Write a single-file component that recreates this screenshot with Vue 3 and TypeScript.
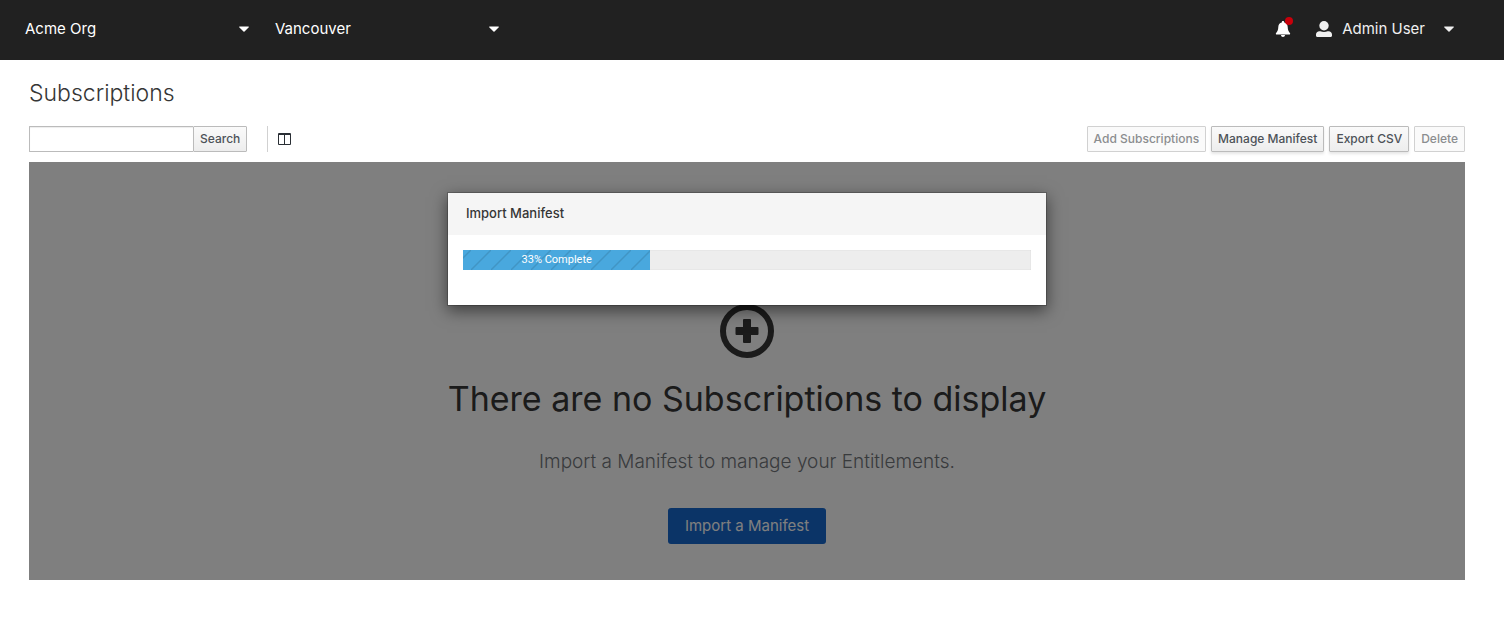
<script setup lang="ts">
import { ref } from 'vue'

interface Action {
  label: string
  disabled: boolean
}

const contexts = ['Acme Org', 'Vancouver']
const query = ref('')
const progress = ref(33)
const actions: Action[] = [
  { label: 'Add Subscriptions', disabled: true },
  { label: 'Manage Manifest', disabled: false },
  { label: 'Export CSV', disabled: false },
  { label: 'Delete', disabled: true },
]
</script>

<template>
  <header class="masthead">
    <nav class="contexts" aria-label="Context">
      <button v-for="name in contexts" :key="name" type="button" class="context">
        <span>{{ name }}</span>
        <svg class="caret" viewBox="0 0 10 6" aria-hidden="true"><path d="M.6.5h8.8c.5 0 .7.5.4.8L5.5 5.5c-.3.3-.7.3-1 0L.2 1.3C-.1 1 .1.5.6.5z" /></svg>
      </button>
    </nav>
    <div class="tools">
      <button type="button" class="bell" aria-label="Notifications">
        <svg viewBox="0 0 16 16" aria-hidden="true">
          <path d="M8 0c.7 0 1.200.5 1.200 1.200v.3c2.200.5 3.500 2.300 3.500 4.600 0 3.200 1.200 4.800 2.200 5.900.6.700.2 1.600-.7 1.600H1.800c-.9 0-1.300-.9-.7-1.600 1-1.100 2.200-2.700 2.200-5.900 0-2.300 1.300-4.100 3.500-4.600v-.3C6.800.5 7.300 0 8 0zM6 14h4c0 1.100-.9 2-2 2s-2-.9-2-2z" />
        </svg>
        <span class="dot"></span>
      </button>
      <button type="button" class="user">
        <svg class="avatar" viewBox="0 0 16 16" aria-hidden="true">
          <circle cx="8" cy="4.700" r="4.700" />
          <path d="M3.400 10.200h1c2.200 1 5 1 7.200 0h1c1.900 0 3.400 1.400 3.400 3.300v1.300c0 .7-.5 1.200-1.200 1.200H1.200C.5 16 0 15.500 0 14.800v-1.300c0-1.900 1.500-3.300 3.400-3.300z" />
        </svg>
        <span>Admin User</span>
        <svg class="caret" viewBox="0 0 10 6" aria-hidden="true"><path d="M.6.5h8.8c.5 0 .7.5.4.8L5.5 5.5c-.3.3-.7.3-1 0L.2 1.3C-.1 1 .1.5.6.5z" /></svg>
      </button>
    </div>
  </header>

  <main class="page">
    <h1>Subscriptions</h1>
    <div class="toolbar">
      <form class="search" @submit.prevent>
        <input v-model="query" type="text" aria-label="Search subscriptions" />
        <button type="submit" class="btn">Search</button>
      </form>
      <div class="columns">
        <button type="button" aria-label="Choose columns">
          <svg viewBox="0 0 13 12" aria-hidden="true"><path fill-rule="evenodd" d="M1 0h11a1 1 0 0 1 1 1v10a1 1 0 0 1-1 1H1a1 1 0 0 1-1-1V1a1 1 0 0 1 1-1zM1 2v9h5V2zM7 2v9h5V2z" /></svg>
        </button>
      </div>
      <div class="actions">
        <button v-for="a in actions" :key="a.label" type="button" class="btn" :disabled="a.disabled">{{ a.label }}</button>
      </div>
    </div>

    <section class="stage">
      <div class="empty">
        <svg class="plus" viewBox="0 0 54 54" aria-hidden="true">
          <circle cx="27" cy="27" r="24" fill="none" stroke="currentColor" stroke-width="6" />
          <path d="M24 15h6a1 1 0 0 1 1 1v7h6.500a1 1 0 0 1 1 1v6a1 1 0 0 1-1 1H31v7a1 1 0 0 1-1 1h-6a1 1 0 0 1-1-1v-7h-6.500a1 1 0 0 1-1-1v-6a1 1 0 0 1 1-1H23v-7a1 1 0 0 1 1-1z" fill="currentColor" />
        </svg>
        <h2>There are no Subscriptions to display</h2>
        <p>Import a Manifest to manage your Entitlements.</p>
        <button type="button" class="primary">Import a Manifest</button>
      </div>
      <div class="backdrop">
        <div class="dialog" role="dialog" aria-modal="true" aria-labelledby="dialog-title">
          <div class="dialog-head"><h3 id="dialog-title">Import Manifest</h3></div>
          <div class="dialog-body">
            <div class="progress" role="progressbar" aria-label="Import progress" :aria-valuenow="progress" aria-valuemin="0" aria-valuemax="100">
              <div class="bar" :style="{ width: progress + '%' }">{{ progress }}% Complete</div>
            </div>
          </div>
        </div>
      </div>
    </section>
  </main>
</template>

<style>
body {
  background: #fff;
  color: #363636;
  font-family: Inter, "Noto Sans", sans-serif;
}
</style>

<style scoped>
* {
  box-sizing: border-box;
}
button,
input {
  font-family: inherit;
}
button {
  cursor: pointer;
}
button:disabled {
  cursor: default;
}
h1,
h2,
h3,
p {
  margin: 0;
}
.masthead {
  display: flex;
  justify-content: space-between;
  height: 60px;
  padding: 0 49px 3px 25px;
  background: #212121;
}
.contexts,
.tools {
  display: flex;
}
.masthead button {
  display: flex;
  align-items: center;
  border: 0;
  padding: 0;
  background: none;
  color: #fff;
  font-size: 15px;
}
.masthead svg {
  fill: currentColor;
}
.masthead .context {
  justify-content: space-between;
  width: 250px;
  padding-right: 26px;
}
.caret {
  width: 10px;
  height: 6px;
}
.masthead .bell {
  position: relative;
  margin-right: 25px;
}
.bell svg {
  width: 16px;
  height: 16px;
}
.dot {
  position: absolute;
  top: 17px;
  right: -2px;
  width: 8px;
  height: 8px;
  border-radius: 50%;
  background: #c9000b;
}
.masthead .user {
  color: #f0f0f0;
}
.avatar {
  width: 16px;
  height: 16px;
  margin-right: 10px;
}
.user .caret {
  margin: 0 1px 0 19px;
}
.page {
  padding: 18px 39px 0 29px;
}
h1 {
  font-size: 23px;
  font-weight: 300;
  line-height: 30px;
}
.toolbar {
  display: flex;
  align-items: stretch;
  height: 26px;
  margin: 18px 0 10px;
}
.search {
  display: flex;
}
.search input {
  width: 164px;
  padding: 2px 6px;
  border: 1px solid #bbb;
  border-right: 0;
  border-radius: 1px 0 0 1px;
  box-shadow: inset 0 1px 1px rgba(3, 3, 3, 0.075);
  font-size: 12px;
}
.btn {
  padding: 0 6px 1px;
  border: 1px solid #bbb;
  border-radius: 1px;
  background: linear-gradient(#fafafa, #ededed);
  box-shadow: 0 2px 3px rgba(3, 3, 3, 0.1);
  color: #4d5258;
  font-size: 12px;
  font-weight: 500;
  white-space: nowrap;
}
.search .btn {
  box-shadow: none;
}
.btn:disabled {
  border-color: #d1d1d1;
  background: #fafafa;
  box-shadow: none;
  color: #8b8d8f;
}
.columns {
  display: flex;
  margin-left: 20px;
  padding-left: 10px;
  border-left: 1px solid #d1d1d1;
}
.columns button {
  display: flex;
  align-items: center;
  border: 0;
  padding: 0;
  background: none;
}
.columns svg {
  width: 13px;
  height: 12px;
  fill: #292e34;
}
.actions {
  display: flex;
  gap: 5px;
  margin-left: auto;
}
.stage {
  position: relative;
}
.empty {
  display: flex;
  flex-direction: column;
  align-items: center;
  padding: 142px 24px 36px;
}
.plus {
  width: 54px;
  height: 54px;
}
h2 {
  margin-top: 17px;
  font-size: 34px;
  font-weight: 400;
  line-height: 48px;
  text-align: center;
}
.empty p {
  margin: 24px 0 31px;
  color: #72767b;
  font-size: 19px;
  font-weight: 300;
  line-height: 30px;
  text-align: center;
}
.primary {
  height: 36px;
  padding: 0 17px 2px;
  border: 0;
  border-radius: 3px;
  background: #1668ce;
  color: #fff;
  font-size: 15px;
}
.backdrop {
  position: absolute;
  inset: 0;
  padding-top: 30px;
  background: rgba(0, 0, 0, 0.5);
}
.dialog {
  width: 600px;
  max-width: 100%;
  margin: 0 auto;
  border: 1px solid rgba(0, 0, 0, 0.2);
  background: #fff;
  background-clip: padding-box;
  box-shadow: 0 5px 15px rgba(0, 0, 0, 0.5);
}
.dialog-head {
  padding: 10px 18px 12px;
  background: #f5f5f5;
}
h3 {
  font-size: 13px;
  font-weight: 500;
  line-height: 20px;
}
.dialog-body {
  padding: 15px 15px 35px;
}
.progress {
  height: 20px;
  background: #ededed;
  box-shadow: inset 0 0 1px rgba(3, 3, 3, 0.25);
}
.bar {
  height: 20px;
  background-color: #49a8de;
  background-image: linear-gradient(-45deg, transparent 47%, rgba(3, 3, 3, 0.12) 48%, rgba(3, 3, 3, 0.12) 52%, transparent 53%);
  background-position: 8px 0;
  background-size: 20px 20px;
  color: #fff;
  font-family: Roboto, Inter, sans-serif;
  font-size: 11px;
  line-height: 20px;
  text-align: center;
}
</style>
